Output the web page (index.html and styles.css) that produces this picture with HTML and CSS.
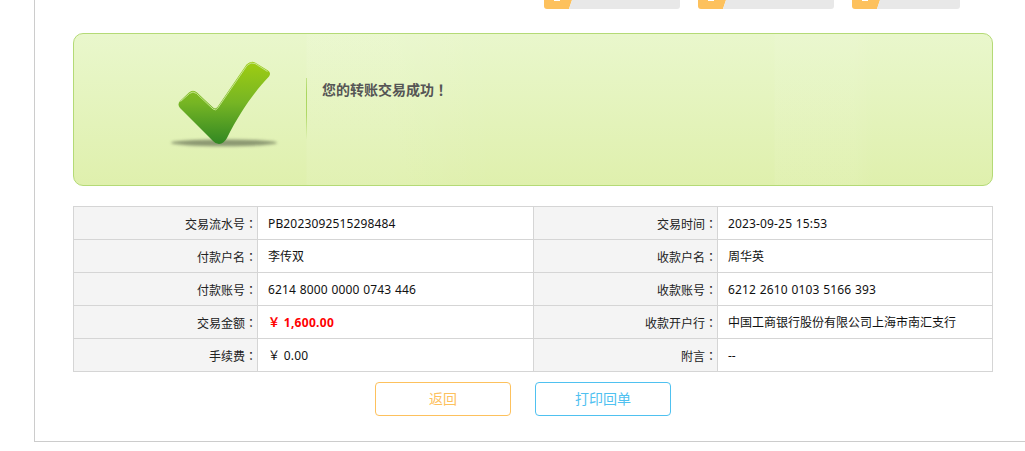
FILE: index.html
```html
<!DOCTYPE html>
<html lang="zh-CN">
<head>
<meta charset="utf-8">
<title>转账结果</title>
<link rel="stylesheet" href="styles.css">
</head>
<body>
<div class="page">
  <main class="panel">
    <div class="steps">
      <div class="step"><span class="step-num"></span><span class="step-label"></span></div>
      <div class="step"><span class="step-num"></span><span class="step-label"></span></div>
      <div class="step step-short"><span class="step-num"></span><span class="step-label"></span></div>
    </div>
    <section class="banner">
      <div class="banner-icon">
        <svg class="check" width="130" height="110" viewBox="160 50 130 110" aria-hidden="true">
          <defs>
            <linearGradient id="g" x1="0" y1="0" x2="0" y2="1">
              <stop offset="0" stop-color="#9fcd12"/>
              <stop offset=".5" stop-color="#76b524"/>
              <stop offset="1" stop-color="#318723"/>
            </linearGradient>
            <filter id="b" x="-20%" y="-100%" width="140%" height="300%"><feGaussianBlur stdDeviation="1.6"/></filter>
          </defs>
          <ellipse cx="224" cy="142.8" rx="53" ry="3.4" fill="#6f7a5c" opacity=".75" filter="url(#b)"/>
          <path d="M246.5 64.5 Q251 60.5 255 62.5 L268 70.5 Q271.5 73 269 76.5 C255 91 240 112 227 138 Q224 143.5 219 144 Q215.5 144 213 141 L180 108 Q177 104.5 180 101 L189 92.5 Q193 89 197 92.5 L213 107.5 Q215.5 109.5 217.5 107 Z" fill="url(#g)"/>
          <path d="M180.5 101.5 L189.5 93.5 Q193 90.5 196.5 93.5 L213 109 Q215.5 111 217.5 108.5 L247 65.5 Q251 61.5 255 63.5 L267.5 71.5" fill="none" stroke="#c5e58e" stroke-width="1"/>
        </svg>
      </div>
      <p class="banner-text">您的转账交易成功<span class="tc" lang="zh-TW">！</span></p>
    </section>
    <table class="detail">
      <colgroup><col class="c-label"><col class="c-value"><col class="c-label"><col class="c-last"></colgroup>
      <tr><th>交易流水号<span class="tc" lang="zh-TW">：</span></th><td class="num">PB2023092515298484</td><th>交易时间<span class="tc" lang="zh-TW">：</span></th><td class="num">2023-09-25 15:53</td></tr>
      <tr><th>付款户名<span class="tc" lang="zh-TW">：</span></th><td>李传双</td><th>收款户名<span class="tc" lang="zh-TW">：</span></th><td>周华英</td></tr>
      <tr><th>付款账号<span class="tc" lang="zh-TW">：</span></th><td class="num">6214 8000 0000 0743 446</td><th>收款账号<span class="tc" lang="zh-TW">：</span></th><td class="num">6212 2610 0103 5166 393</td></tr>
      <tr><th>交易金额<span class="tc" lang="zh-TW">：</span></th><td class="amount">￥ 1,600.00</td><th>收款开户行<span class="tc" lang="zh-TW">：</span></th><td>中国工商银行股份有限公司上海市南汇支行</td></tr>
      <tr><th>手续费<span class="tc" lang="zh-TW">：</span></th><td class="num">￥ 0.00</td><th>附言<span class="tc" lang="zh-TW">：</span></th><td>--</td></tr>
    </table>
    <div class="actions">
      <a class="btn btn-back">返回</a>
      <a class="btn btn-print">打印回单</a>
    </div>
  </main>
</div>
</body>
</html>
```
FILE: styles.css
```css
* { box-sizing: border-box; }
html, body { margin: 0; background: #fff; }
body {
  height: 451px;
  overflow: hidden;
  font-family: "Noto Sans", "Noto Sans CJK SC", sans-serif;
  font-size: 12px;
  color: #333;
}
.page { padding-left: 34px; }
.panel {
  width: 1010px;
  height: 442px;
  border-left: 1px solid #ccc;
  border-bottom: 1px solid #ccc;
  padding-left: 38px;
}
.steps {
  display: flex;
  gap: 18px;
  height: 9px;
  margin-left: 471px;
  margin-bottom: 24px;
}
.step { display: flex; width: 136px; height: 9px; position: relative; }
.step-short { width: 108px; }
.step-num {
  width: 28px;
  background: #fdc15d;
  border-bottom-left-radius: 3px;
  clip-path: polygon(0 0, 100% 0, 89% 100%, 0 100%);
  position: relative;
}
.step-num::after {
  content: "";
  position: absolute;
  left: 10px;
  top: 0;
  width: 6px;
  height: 1px;
  background: #fff;
}
.step-label {
  flex: 1;
  margin-left: -3px;
  background: #e8e8e8;
  border-bottom-right-radius: 3px;
  clip-path: polygon(3px 0, 100% 0, 100% 100%, 0 100%);
}
.banner {
  display: flex;
  width: 920px;
  height: 153px;
  border: 1px solid #b4da76;
  border-radius: 10px;
  background:
    linear-gradient(90deg, rgba(255,255,255,0) 232px, rgba(255,255,255,.07) 233px, rgba(255,255,255,.07) 320px, rgba(255,255,255,0) 420px, rgba(255,255,255,0) 700px, rgba(255,255,255,.06) 701px, rgba(255,255,255,.06) 780px, rgba(255,255,255,0) 800px),
    linear-gradient(#e9f7cc, #dff0ad);
}
.banner-icon {
  width: 233px;
  height: 100%;
  padding: 16px 0 0 86px;
  position: relative;
}
.banner-icon::after {
  content: "";
  position: absolute;
  right: 0;
  top: 44px;
  width: 1px;
  height: 62px;
  background: linear-gradient(rgba(169,214,94,.6), #a9d65e 25%, #b0d968 60%, rgba(176,217,104,0));
}
.check { display: block; }
.banner-text {
  margin: 46px 0 0 15px;
  font-family: "Noto Sans CJK SC", sans-serif;
  font-size: 14px;
  line-height: 18px;
  font-weight: 700;
  color: #555;
}
.tc { font-family: "Noto Sans CJK TC", sans-serif; }
.detail {
  width: 919px;
  margin-top: 20px;
  border-collapse: collapse;
  table-layout: fixed;
}
.c-label { width: 184px; }
.c-value { width: 276px; }
.c-last { width: 275px; }
.detail th, .detail td {
  height: 33px;
  padding: 2px 0 0;
  border: 1px solid #d5d5d5;
  font-weight: 400;
  line-height: 18px;
  color: #222;
}
.detail th { text-align: right; background: #f4f4f4; }
.detail td { text-align: left; padding-left: 10px; color: #111; }
.detail td.num { letter-spacing: .15px; word-spacing: .4px; }
.detail td.amount { color: #f00; font-weight: 700; letter-spacing: .3px; }
.actions {
  display: flex;
  justify-content: center;
  gap: 24px;
  width: 900px;
  margin-top: 10px;
}
.btn {
  width: 136px;
  height: 34px;
  border: 1px solid;
  border-radius: 4px;
  font-size: 14px;
  line-height: 32px;
  text-align: center;
}
.btn-back { border-color: #fdc15d; color: #fdc15d; }
.btn-print { border-color: #4fc1f0; color: #4fc1f0; }
```
